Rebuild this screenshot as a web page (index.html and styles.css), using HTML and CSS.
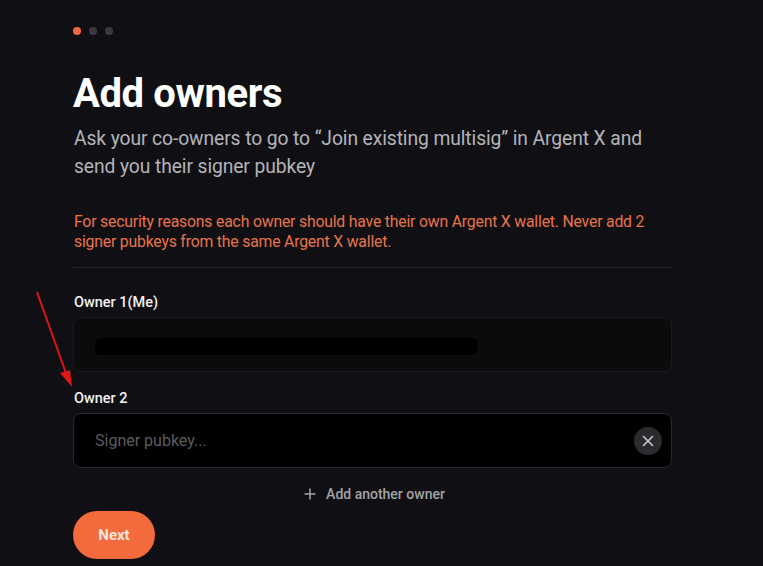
FILE: index.html
```html
<!DOCTYPE html>
<html>
<head>
<meta charset="utf-8">
<link rel="stylesheet" href="styles.css">
</head>
<body>
<div class="page">
  <div class="steps">
    <span class="dot active"></span>
    <span class="dot"></span>
    <span class="dot"></span>
  </div>
  <h1 class="title">Add owners</h1>
  <p class="subtitle">Ask your co-owners to go to “Join existing multisig” in Argent X and send you their signer pubkey</p>
  <p class="warning">For security reasons each owner should have their own Argent X wallet. Never add 2 signer pubkeys from the same Argent X wallet.</p>
  <hr class="divider">
  <div class="field">
    <label class="label">Owner 1(Me)</label>
    <div class="input input-filled">
      <span class="redacted"></span>
    </div>
  </div>
  <div class="field">
    <label class="label">Owner 2</label>
    <div class="input input-empty">
      <span class="placeholder">Signer pubkey...</span>
      <button class="clear" aria-label="Remove">
        <svg width="12" height="12" viewBox="0 0 12 12"><path d="M1.5 1.5 L10.5 10.5 M10.5 1.5 L1.5 10.5" stroke="#c9c9cc" stroke-width="1.6" stroke-linecap="round"/></svg>
      </button>
    </div>
  </div>
  <div class="add-row">
    <button class="add-btn">
      <svg width="12" height="12" viewBox="0 0 12 12"><path d="M6 0.5 V11.5 M0.5 6 H11.5" stroke="#a3a3a8" stroke-width="1.5"/></svg>
      <span>Add another owner</span>
    </button>
  </div>
  <button class="next">Next</button>
</div>
<svg class="arrow" width="60" height="110" viewBox="0 0 60 110">
  <line x1="7" y1="2" x2="37" y2="86" stroke="#e01515" stroke-width="2"/>
  <polygon points="42,97 30,83 40,80" fill="#e01515"/>
</svg>
</body>
</html>
```
FILE: styles.css
```css
html, body {
  margin: 0;
  padding: 0;
  background: #101014;
  height: 100%;
  overflow: hidden;
}
body {
  font-family: Roboto, "Liberation Sans", sans-serif;
  color: #fff;
  position: relative;
}
.page {
  width: 599px;
  margin-left: 73px;
  padding-top: 27px;
  display: flex;
  flex-direction: column;
}
.steps {
  display: flex;
  gap: 8px;
}
.dot {
  width: 8px;
  height: 8px;
  border-radius: 50%;
  background: #3a3a3e;
}
.dot.active {
  background: #f36a3d;
}
.title {
  margin: 35px 0 0 0;
  font-size: 40px;
  font-weight: 700;
  line-height: 48px;
  letter-spacing: -0.4px;
}
.subtitle {
  margin: 7px 0 0 1px;
  font-size: 19.3px;
  line-height: 28px;
  color: #b3b3b8;
  font-weight: 400;
  letter-spacing: -0.1px;
}
.warning {
  margin: 31px 0 0 1px;
  font-size: 15.8px;
  line-height: 20px;
  color: #e8734a;
  letter-spacing: -0.2px;
}
.divider {
  border: 0;
  border-top: 1px solid #27272b;
  margin: 15px 0 0 0;
  width: 100%;
}
.field {
  display: flex;
  flex-direction: column;
}
.label {
  font-size: 14.5px;
  font-weight: 500;
  line-height: 20px;
  margin-top: 25px;
  margin-bottom: 4px;
  margin-left: 1px;
  color: #f2f2f2;
}
.field + .field .label {
  margin-top: 17px;
  margin-bottom: 4px;
}
.input {
  height: 55px;
  border-radius: 8px;
  display: flex;
  align-items: center;
  padding: 0 9px 0 21px;
  box-sizing: border-box;
}
.input-filled {
  background: #0b0b0e;
  border: 1px solid #1b1b1f;
}
.input-empty {
  background: #000;
  border: 1px solid #2a2a2e;
  justify-content: space-between;
}
.redacted {
  display: block;
  width: 383px;
  height: 17px;
  background: #000;
  border-radius: 6px 3px 7px 4px;
  margin-top: 3px;
}
.placeholder {
  font-size: 16px;
  color: #5b5b60;
}
.clear {
  width: 28px;
  height: 28px;
  border-radius: 50%;
  border: 0;
  background: #2b2b2f;
  display: flex;
  align-items: center;
  justify-content: center;
  padding: 0;
}
.add-row {
  display: flex;
  justify-content: center;
  margin-top: 18px;
}
.add-btn {
  background: none;
  border: 0;
  display: flex;
  align-items: center;
  gap: 10px;
  color: #a3a3a8;
  font-family: Roboto, "Liberation Sans", sans-serif;
  font-size: 14px;
  font-weight: 500;
  padding: 0;
  margin-left: 4px;
}
.next {
  margin-top: 9px;
  width: 82px;
  height: 48px;
  border-radius: 24px;
  border: 0;
  background: #f36a3d;
  color: #fde6dc;
  font-family: Roboto, "Liberation Sans", sans-serif;
  font-size: 15px;
  font-weight: 700;
}
.arrow {
  position: absolute;
  left: 30px;
  top: 290px;
}
```
